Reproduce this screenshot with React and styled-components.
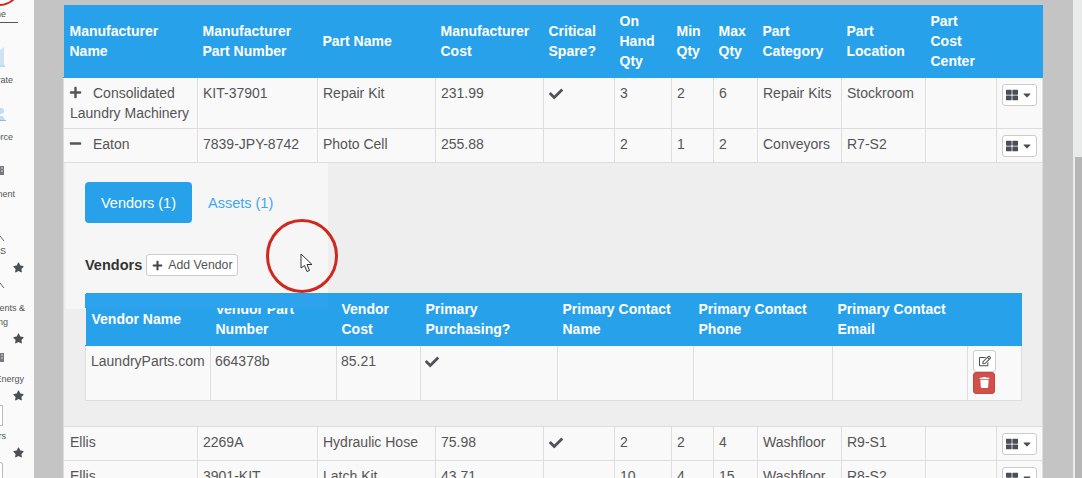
import React from "react";
import styled, { createGlobalStyle } from "styled-components";
import { FaPlus, FaMinus, FaCheck, FaThLarge, FaCaretDown, FaRegEdit, FaTrash, FaStar } from "react-icons/fa";

const partColumns = [134, 120, 118, 108, 71, 57, 42, 44, 84, 84, 71, 46];
const vendorColumns = [125, 126, 84, 137, 136, 139, 135, 54];

const partHeaders = [
  "Manufacturer Name",
  "Manufacturer Part Number",
  "Part Name",
  "Manufacturer Cost",
  "Critical Spare?",
  "On Hand Qty",
  "Min Qty",
  "Max Qty",
  "Part Category",
  "Part Location",
  "Part Cost Center",
  "",
];

const vendorHeaders = [
  "Vendor Name",
  "Vendor Part Number",
  "Vendor Cost",
  "Primary Purchasing?",
  "Primary Contact Name",
  "Primary Contact Phone",
  "Primary Contact Email",
  "",
];

const navItems = [
  { height: 67, icon: "building", gap: 5, label: "Corporate", end: 13 },
  { height: 57, icon: "person", gap: 8, label: "Workforce", end: 13 },
  { height: 57, icon: "gear", gap: 10, label: "Equipment", end: 15 },
  { height: 73, icon: "tick", gap: 1, label: "KPIS", end: 6, star: true },
  { height: 71, icon: "tick", gap: 11, label: "Incidents &", second: "Tracking", end: 25, secondEnd: 8, star: true },
  { height: 57, icon: "gear", gap: 8, label: "Utilities Energy", end: 24, star: true },
  { height: 57, icon: "box", gap: 2, label: "Meters", end: 6, star: true },
  { height: 30, icon: "box" },
];

function NavIcon({ kind, open }) {
  if (kind === "building") {
    return (
      <svg width="5" height="20" viewBox="0 0 5 20">
        <path d="M0 3 L4 0 V18 H0 Z" fill="#cfe3f2" />
        <path d="M0 19 H5" stroke="#8fbcdc" />
      </svg>
    );
  }
  if (kind === "person") {
    return (
      <svg width="6" height="13" viewBox="0 0 6 13">
        <circle cx="1" cy="3" r="3" fill="#c4dcee" />
        <path d="M0 8 L3 8 L5 12 H0 Z" fill="#c4dcee" />
        <path d="M0 12.5 H6" stroke="#8fbcdc" />
      </svg>
    );
  }
  if (kind === "gear") {
    return (
      <svg width="5" height="10" viewBox="0 0 5 10">
        <path d="M0 0 H4 V9 H0 Z" fill="#77797c" />
        <path d="M1 2 H3 M1 5 H3" stroke="#ddd" />
      </svg>
    );
  }
  if (kind === "tick") {
    return (
      <svg width="5" height="6" viewBox="0 0 5 6">
        <path d="M0 0 L4 5" stroke="#666" fill="none" />
      </svg>
    );
  }
  return <NavBox $open={open} />;
}

export default function App() {
  return (
    <>
      <GlobalStyle />
      <Screen>
        <Sidebar>
          <Brand>
            <BrandArc width="15" height="6" viewBox="0 0 15 6">
              <path d="M-1 5 C5 5 10 3 14 -1" stroke="#d0281c" strokeWidth="2" fill="none" />
            </BrandArc>
            <NavLabel $end={6}>Home</NavLabel>
          </Brand>
          {navItems.map((item, i) => (
            <NavItem key={i} $height={item.height} $top={item.label === undefined}>
              <NavIconSlot $gap={item.gap || 0}>
                <NavIcon kind={item.icon} open={item.label === undefined} />
              </NavIconSlot>
              {item.label && <NavLabel $end={item.end}>{item.label}</NavLabel>}
              {item.second && <NavLabel $end={item.secondEnd}>{item.second}</NavLabel>}
              {item.star && (
                <NavStar>
                  <FaStar />
                </NavStar>
              )}
            </NavItem>
          ))}
        </Sidebar>

        <Stage>
          <Table>
            <colgroup>
              {partColumns.map((w, i) => (
                <Col key={i} $width={w} />
              ))}
            </colgroup>
            <thead>
              <tr>
                {partHeaders.map((h, i) => (
                  <Th key={i}>{h}</Th>
                ))}
              </tr>
            </thead>
            <tbody>
              <PartRow
                expander="plus"
                cells={["Consolidated Laundry Machinery", "KIT-37901", "Repair Kit", "231.99", true, "3", "2", "6", "Repair Kits", "Stockroom", ""]}
              />
              <PartRow
                expander="minus"
                cells={["Eaton", "7839-JPY-8742", "Photo Cell", "255.88", false, "2", "1", "2", "Conveyors", "R7-S2", ""]}
              />
              <tr>
                <ExpandedCell colSpan={12}>
                  <GhostPanel />
                  <HeaderMask />
                  <Expanded>
                    <Tabs>
                      <Tab $active>Vendors (1)</Tab>
                      <Tab>Assets (1)</Tab>
                    </Tabs>
                    <SectionRow>
                      <SectionTitle>Vendors</SectionTitle>
                      <AddButton>
                        <FaPlus />
                        Add Vendor
                      </AddButton>
                    </SectionRow>
                    <VendorTable>
                      <colgroup>
                        {vendorColumns.map((w, i) => (
                          <Col key={i} $width={w} />
                        ))}
                      </colgroup>
                      <thead>
                        <tr>
                          {vendorHeaders.map((h, i) => (
                            <VendorTh key={i}>{h}</VendorTh>
                          ))}
                        </tr>
                      </thead>
                      <tbody>
                        <tr>
                          <VendorTd>LaundryParts.com</VendorTd>
                          <VendorTd>664378b</VendorTd>
                          <VendorTd>85.21</VendorTd>
                          <VendorTd>
                            <CheckMark>
                              <FaCheck />
                            </CheckMark>
                          </VendorTd>
                          <VendorTd />
                          <VendorTd />
                          <VendorTd />
                          <VendorTd>
                            <EditButton>
                              <FaRegEdit />
                            </EditButton>
                            <DeleteButton>
                              <FaTrash />
                            </DeleteButton>
                          </VendorTd>
                        </tr>
                      </tbody>
                    </VendorTable>
                  </Expanded>
                </ExpandedCell>
              </tr>
              <PartRow cells={["Ellis", "2269A", "Hydraulic Hose", "75.98", true, "2", "2", "4", "Washfloor", "R9-S1", ""]} />
              <PartRow cells={["Ellis", "3901-KIT", "Latch Kit", "43.71", false, "10", "4", "15", "Washfloor", "R8-S2", ""]} />
            </tbody>
          </Table>
        </Stage>

        <Scrollbar>
          <ScrollThumb />
        </Scrollbar>

        <ClickRing width="74" height="76" viewBox="0 0 74 76">
          <ellipse cx="37" cy="38" rx="34.5" ry="35.5" stroke="#d0281c" strokeWidth="3" fill="none" />
        </ClickRing>
        <Pointer width="14" height="21" viewBox="0 0 14 21">
          <path d="M1 1 L1 15 L4.5 12.5 L7 18.5 L9.5 17.5 L7 11.5 L12 11.5 Z" fill="#fff" stroke="#333" strokeWidth="1" />
        </Pointer>
      </Screen>
    </>
  );
}

function PartRow({ expander, cells }) {
  return (
    <tr>
      {cells.map((cell, i) => (
        <Td key={i}>
          {i === 0 && expander && <Expander>{expander === "plus" ? <FaPlus /> : <FaMinus />}</Expander>}
          {cell === true ? (
            <CheckMark>
              <FaCheck />
            </CheckMark>
          ) : (
            cell || null
          )}
        </Td>
      ))}
      <Td>
        <ActionCell>
          <MenuButton>
            <FaThLarge />
            <FaCaretDown />
          </MenuButton>
        </ActionCell>
      </Td>
    </tr>
  );
}

const GlobalStyle = createGlobalStyle`
  html, body {
    margin: 0;
    padding: 0;
    height: 478px;
    overflow: hidden;
    background: #c4c4c4;
    font-family: "Liberation Sans", Arial, sans-serif;
    font-size: 14px;
    line-height: 20px;
    color: #555;
  }
  * {
    box-sizing: border-box;
  }
`;

const Screen = styled.div`
  position: relative;
  display: flex;
  width: 1082px;
  height: 478px;
  overflow: hidden;
`;

const Sidebar = styled.nav`
  flex: 0 0 34px;
  height: 478px;
  overflow: hidden;
  background: #fafafa;
`;

const Brand = styled.div`
  position: relative;
  width: 18px;
  height: 23px;
  padding-top: 6px;
  border-bottom: 1px solid #555;
`;

const BrandArc = styled.svg`
  position: absolute;
  top: 0;
  left: 0;
`;

const NavItem = styled.div`
  display: flex;
  flex-direction: column;
  justify-content: ${(p) => (p.$top ? "flex-start" : "flex-end")};
  height: ${(p) => p.$height}px;
  padding-bottom: ${(p) => (p.$top ? 0 : 4)}px;
`;

const NavIconSlot = styled.div`
  display: flex;
  margin-bottom: ${(p) => p.$gap}px;
`;

const NavLabel = styled.div`
  display: flex;
  justify-content: flex-end;
  width: ${(p) => p.$end}px;
  margin-top: 3px;
  font-size: 9px;
  line-height: 11px;
  white-space: nowrap;
  color: #555;
`;

const NavStar = styled.div`
  display: flex;
  margin: 5px 0 0 13px;
  font-size: 11px;
  line-height: 11px;
  color: #4a5058;
`;

const NavBox = styled.div`
  width: 3px;
  height: 21px;
  background: #fff;
  border: 1px solid #bbb;
  border-left: 0;
  border-radius: 0 ${(p) => (p.$open ? "3px" : "0")} 0 0;
`;

const Stage = styled.main`
  flex: 0 0 1039px;
  padding: 5px 30px 0 29px;
  background: #c4c4c4;
`;

const Scrollbar = styled.div`
  flex: 0 0 9px;
  height: 478px;
  padding: 157px 0 0 2px;
  background: #e9eaea;
`;

const ScrollThumb = styled.div`
  height: 321px;
  background: #b6b6b6;
`;

const Table = styled.table`
  width: 979px;
  table-layout: fixed;
  border-collapse: collapse;
`;

const Col = styled.col`
  width: ${(p) => p.$width}px;
`;

const Th = styled.th`
  height: 72px;
  padding: 6px 5px;
  background: #28a1eb;
  border-bottom: 1px solid #28a1eb;
  color: #fff;
  font-weight: bold;
  text-align: left;
  vertical-align: middle;
  &:first-child {
    padding-left: 6px;
  }
`;

const Td = styled.td`
  height: 34px;
  padding: 5px;
  background: #f9f9f9;
  border: 1px solid #ddd;
  vertical-align: top;
  &:first-child {
    padding-left: 6px;
  }
`;

const Expander = styled.span`
  display: inline-block;
  width: 24px;
  margin-left: -1px;
  font-size: 13px;
  line-height: 14px;
  color: #555;
  vertical-align: -1px;
`;

const CheckMark = styled.span`
  font-size: 14px;
  color: #4f5257;
  vertical-align: -3px;
`;

const ActionCell = styled.div`
  display: flex;
  justify-content: center;
`;

const MenuButton = styled.button`
  display: flex;
  flex: none;
  align-items: center;
  justify-content: center;
  gap: 3px;
  width: 35px;
  height: 22px;
  padding: 0;
  margin-top: 1px;
  background: #fff;
  border: 1px solid #ccc;
  border-radius: 3px;
  font-size: 12px;
  color: #4a4f57;
`;

const ExpandedCell = styled.td`
  position: relative;
  padding: 0;
  background: #eee;
  border: 1px solid #ddd;
`;

const GhostPanel = styled.div`
  position: absolute;
  top: 0;
  left: 2px;
  width: 262px;
  height: 146px;
  background: #f6f6f6;
`;

const HeaderMask = styled.div`
  position: absolute;
  z-index: 2;
  top: 131px;
  left: 21px;
  width: 243px;
  height: 14px;
  background: #2ca3ec;
`;

const Expanded = styled.div`
  position: relative;
  display: flex;
  flex-direction: column;
  height: 263px;
  padding: 19px 20px 0 21px;
`;

const Tabs = styled.div`
  display: flex;
  height: 41px;
  font-size: 14.5px;
`;

const Tab = styled.a`
  display: flex;
  align-items: center;
  padding: 0 16px;
  border-radius: 4px;
  background: ${(p) => (p.$active ? "#28a1eb" : "transparent")};
  color: ${(p) => (p.$active ? "#fff" : "#3fa8ea")};
`;

const SectionRow = styled.div`
  display: flex;
  align-items: center;
  gap: 4px;
  height: 22px;
  margin: 31px 0 17px;
`;

const SectionTitle = styled.strong`
  color: #333;
  font-size: 14.5px;
  font-weight: bold;
`;

const AddButton = styled.button`
  display: flex;
  align-items: center;
  gap: 5px;
  height: 22px;
  width: 92px;
  padding: 0 5px;
  background: #fff;
  border: 1px solid #ccc;
  border-radius: 3px;
  font-family: inherit;
  font-size: 12.3px;
  white-space: nowrap;
  color: #555;
  svg {
    flex: none;
    font-size: 11px;
    color: #444;
  }
`;

const VendorTable = styled.table`
  width: 936px;
  table-layout: fixed;
  border-collapse: collapse;
`;

const VendorTh = styled.th`
  height: 52px;
  padding: 5px;
  background: #28a1eb;
  border-bottom: 1px solid #28a1eb;
  color: #fff;
  font-weight: bold;
  text-align: left;
  vertical-align: middle;
  &:first-child {
    padding-left: 6px;
  }
`;

const VendorTd = styled.td`
  height: 55px;
  padding: 5px 5px 5px 4px;
  background: #f9f9f9;
  border: 1px solid #ddd;
  vertical-align: top;
  &:first-child {
    padding-left: 5px;
  }
  &:last-child {
    padding-left: 5px;
  }
`;

const EditButton = styled.button`
  display: flex;
  align-items: center;
  justify-content: center;
  width: 23px;
  height: 22px;
  padding: 0;
  margin-top: -1px;
  background: #fff;
  border: 1px solid #ccc;
  border-radius: 3px;
  font-size: 12px;
  color: #4a4f57;
`;

const DeleteButton = styled.button`
  display: flex;
  align-items: center;
  justify-content: center;
  width: 22px;
  height: 22px;
  padding: 0;
  background: #d2504a;
  border: 1px solid #c9443e;
  border-radius: 3px;
  font-size: 11px;
  color: #fff;
`;

const ClickRing = styled.svg`
  position: absolute;
  left: 265px;
  top: 218px;
  pointer-events: none;
`;

const Pointer = styled.svg`
  position: absolute;
  left: 300px;
  top: 253px;
  pointer-events: none;
`;
